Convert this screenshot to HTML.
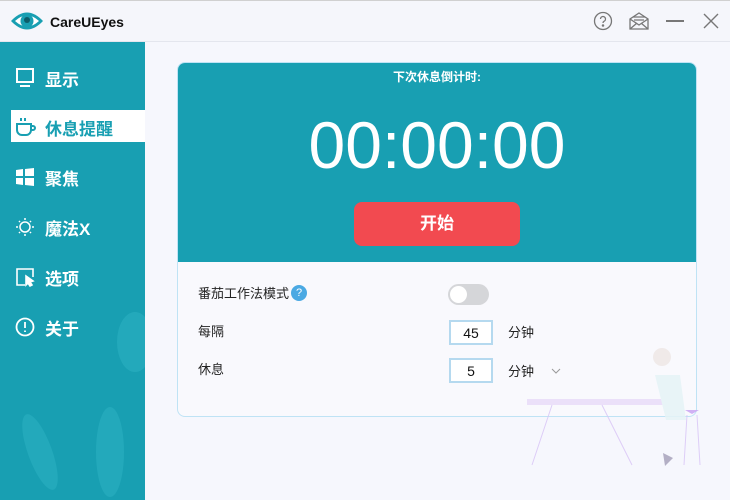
<!DOCTYPE html>
<html><head><meta charset="utf-8"><style>
*{margin:0;padding:0;box-sizing:border-box}
body{width:730px;height:500px;overflow:hidden;font-family:"Liberation Sans","Noto Sans CJK SC",sans-serif;background:#f6f7fd;position:relative}
.title{position:absolute;left:0;top:0;width:730px;height:42px;background:#f5f6fb;border-bottom:1px solid #e4e6ee;border-top:1px solid #d0d0d0}
.title .name{position:absolute;left:50px;top:13px;font-size:14px;font-weight:bold;color:#111}
.side{position:absolute;left:0;top:42px;width:145px;height:458px;background:#189fb2;overflow:hidden}
.item{position:absolute;left:11px;width:134px;height:32px;color:#fff;font-weight:bold;font-size:17px}
.item span{position:absolute;left:34px;top:5px}
.item svg{position:absolute;left:4px;top:7px}
.item.sel{background:#fff;color:#189fb2}
.card{position:absolute;left:177px;top:62px;width:520px;height:355px;border:1px solid #bfe3f5;border-radius:8px;background:#f9f9fd;overflow:hidden}
.top{position:absolute;left:0;top:0;width:100%;height:199px;background:#189fb2}
.lbl{position:absolute;left:0;width:100%;text-align:center;color:#fff;top:5px;font-size:12px;font-weight:bold}
.time{position:absolute;left:0;width:100%;text-align:center;color:#fff;top:46px;font-size:66px;line-height:72px}
.btn{position:absolute;left:176px;top:139px;width:166px;height:44px;background:#f24a50;border-radius:8px;color:#fff;font-size:17px;font-weight:bold;text-align:center;line-height:44px}
.t{position:absolute;font-size:13px;color:#222}
.box{position:absolute;width:44px;height:25px;border:2px solid #b5d9ef;background:#fff;text-align:center;font-size:14px;line-height:23px;color:#111}
</style></head><body>
<div class="title">
<svg style="position:absolute;left:10px;top:9px" width="34" height="22" viewBox="0 0 34 22"><path d="M1 11 Q17 -6 33 11 Q17 28 1 11Z" fill="#189fb2"/><path d="M5 11 Q17 0 29 11 Q17 22 5 11Z" fill="#fff"/><circle cx="17" cy="11" r="6.5" fill="#189fb2"/><circle cx="17" cy="10" r="3" fill="#0c5d6a"/></svg>
<div class="name">CareUEyes</div>
<svg style="position:absolute;left:593px;top:10px" width="20" height="20" viewBox="0 0 20 20" fill="none" stroke="#777" stroke-width="1.3"><circle cx="10" cy="10" r="8.5"/><path d="M7.5 8a2.5 2.5 0 1 1 3.5 2.3c-.8.4-1 .9-1 1.7"/><circle cx="10" cy="14.5" r=".6" fill="#777"/></svg>
<svg style="position:absolute;left:629px;top:11px" width="20" height="18" viewBox="0 0 20 18" fill="none" stroke="#777" stroke-width="1.3"><path d="M1 7v10h18V7L10 1Z"/><path d="M1 17l7-6M19 17l-7-6M1 7l9 6 9-6M4 5h12M5 8h10"/></svg>
<div style="position:absolute;left:666px;top:19px;width:18px;height:1.5px;background:#777"></div>
<svg style="position:absolute;left:703px;top:12px" width="16" height="16" stroke="#777" stroke-width="1.4"><path d="M1 1L15 15M15 1L1 15"/></svg>
</div>
<div class="side">
<svg style="position:absolute;left:0;top:260px" width="145" height="200" viewBox="0 0 145 200"><g fill="#2bb0c1" opacity=".6"><ellipse cx="135" cy="40" rx="18" ry="30"/><ellipse cx="40" cy="150" rx="12" ry="40" transform="rotate(-20 40 150)"/><ellipse cx="110" cy="150" rx="14" ry="45"/></g></svg>
<div class="item" style="top:19px"><svg width="20" height="20" fill="none" stroke="#fff" stroke-width="2"><rect x="2" y="1" width="16" height="13"/><path d="M5 18h10"/></svg><span>显示</span></div>
<div class="item sel" style="top:68px"><svg width="22" height="20" fill="none" stroke="#189fb2" stroke-width="2"><path d="M2 7h14v6a5 5 0 0 1-5 5H7a5 5 0 0 1-5-5Z M16 9h2a2 2 0 0 1 0 4h-2M6 1v3M10 1v3"/></svg><span>休息提醒</span></div>
<div class="item" style="top:118px"><svg width="20" height="20" fill="#fff"><path d="M1 3l7-1v7H1ZM10 2l9-1v8h-9ZM1 11h7v7l-7-1ZM10 11h9v8l-9-1Z"/></svg><span>聚焦</span></div>
<div class="item" style="top:168px"><svg width="20" height="20" fill="none" stroke="#fff" stroke-width="1.5"><circle cx="10" cy="10" r="5"/><path d="M10 1v2M10 17v2M1 10h2M17 10h2M4 4l1 1M15 15l1 1M4 16l1-1M15 5l1-1"/></svg><span>魔法X</span></div>
<div class="item" style="top:218px"><svg width="20" height="20" fill="none" stroke="#fff" stroke-width="1.6"><path d="M10 18H2V2h16v8"/><path d="M11 9l7 5-3 1 2 3-2 1-2-3-2 2Z" fill="#fff"/></svg><span>选项</span></div>
<div class="item" style="top:268px"><svg width="20" height="20" fill="none" stroke="#fff" stroke-width="1.8"><circle cx="10" cy="10" r="8.5"/><path d="M10 5v6M10 13.5v1.5"/></svg><span>关于</span></div>
</div>
<div class="card">
<div class="top"><div class="lbl">下次休息倒计时:</div><div class="time">00:00:00</div><div class="btn">开始</div></div>
<div class="t" style="left:20px;top:220px">番茄工作法模式</div>
<div style="position:absolute;left:113px;top:222px;width:16px;height:16px;border-radius:50%;background:#4ba9e3;color:#fff;font-size:11px;text-align:center;line-height:16px">?</div>
<div style="position:absolute;left:270px;top:221px;width:41px;height:21px;border-radius:11px;background:#d5d6d9"><div style="position:absolute;left:2px;top:2px;width:17px;height:17px;border-radius:50%;background:#fff"></div></div>
<div class="t" style="left:20px;top:258px">每隔</div>
<div class="box" style="left:271px;top:257px">45</div>
<div class="t" style="left:330px;top:259px">分钟</div>
<div class="t" style="left:20px;top:296px">休息</div>
<div class="box" style="left:271px;top:295px">5</div>
<div class="t" style="left:330px;top:298px">分钟</div>
<svg style="position:absolute;left:373px;top:305px" width="10" height="6" stroke="#999" fill="none"><path d="M1 1l4 4 4-4"/></svg>
</div>
<svg style="position:absolute;left:527px;top:345px;opacity:.85" width="180" height="130" viewBox="0 0 180 130"><rect x="0" y="54" width="136" height="6" fill="#e9dcf9"/><path d="M25 60L5 120M75 60L105 120" stroke="#d9c6f7" fill="none"/><circle cx="135" cy="12" r="9" fill="#efe8e6"/><path d="M128 30h25l6 45-20 0Z" fill="#e6f4f7"/><path d="M158 65h14l-7 4Z" fill="#c9a5f3"/><path d="M160 70l-3 50M170 70l3 50" stroke="#d9c6f7"/><path d="M136 108l10 5-8 8Z" fill="#a8a3bc"/></svg>
</body></html>
